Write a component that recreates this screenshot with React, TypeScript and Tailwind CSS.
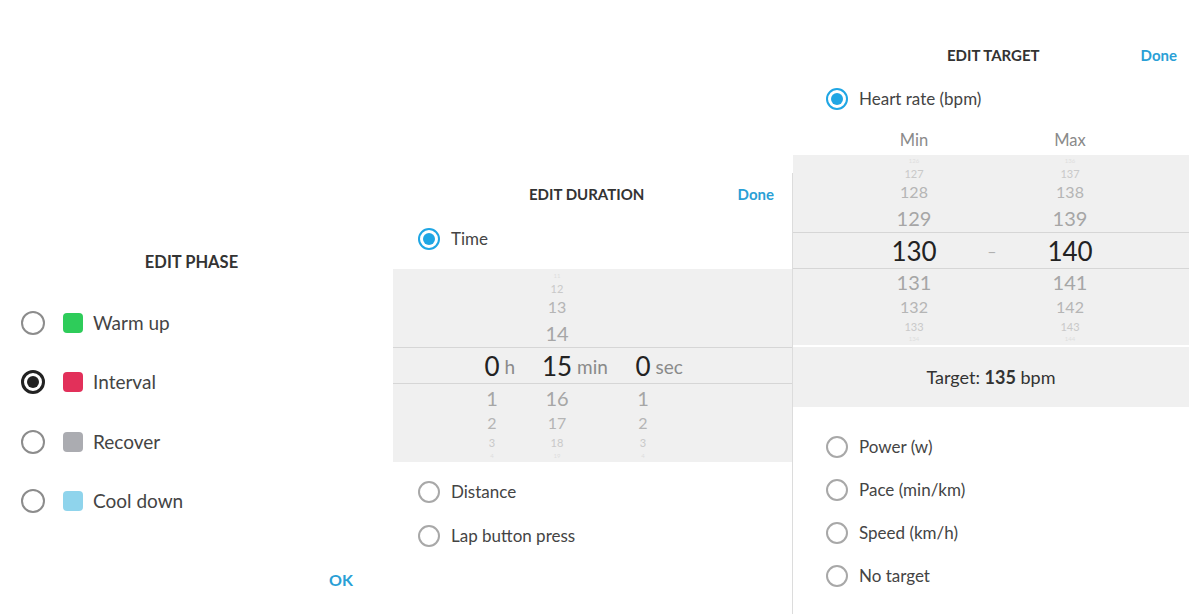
import React from 'react';

type Cell = { v: string; h: string; s: string; c: string };

const TOP_M_H = ['h-[13px]', 'h-[13px]', 'h-[24px]', 'h-[28px]'];
const TOP_R_H = ['h-[12px]', 'h-[13px]', 'h-[24px]', 'h-[28px]'];
const BOT_M_H = ['h-[28px]', 'h-[22px]', 'h-[16px]', 'h-[12px]'];
const BOT_R_H = ['h-[26px]', 'h-[24px]', 'h-[14px]', 'h-[12px]'];
const TOP_S = ['text-[6px]', 'text-[11px]', 'text-[16px]', 'text-[20px]'];
const TOP_C = ['text-[#dedede]', 'text-[#c9c9c9]', 'text-[#b5b5b5]', 'text-[#a6a6a6]'];
const BOT_S = ['text-[20px]', 'text-[16px]', 'text-[11px]', 'text-[6px]'];
const BOT_C = ['text-[#a6a6a6]', 'text-[#b5b5b5]', 'text-[#c9c9c9]', 'text-[#dedede]'];

function build(vals: string[], hs: string[], ss: string[], cs: string[]): Cell[] {
  return vals.map((v, i) => ({ v, h: hs[i], s: ss[i], c: cs[i] }));
}

function WheelCol({ cells, className }: { cells: Cell[]; className: string }) {
  return (
    <div className={`flex flex-col ${className}`}>
      {cells.map((c, i) => (
        <div key={i} className={`${c.h} flex items-center justify-center leading-none ${c.s} ${c.c}`}>
          {c.v}
        </div>
      ))}
    </div>
  );
}

function RadioOff({ big }: { big?: boolean }) {
  return big ? (
    <div className="w-[24px] h-[24px] rounded-full border-2 border-[#8c8c8c] shrink-0" />
  ) : (
    <div className="w-[22px] h-[22px] rounded-full border-2 border-[#a8a8a8] shrink-0" />
  );
}

function RadioBlue() {
  return (
    <div className="w-[22px] h-[22px] rounded-full border-[2.5px] border-[#1fa6e4] flex items-center justify-center shrink-0">
      <div className="w-[12px] h-[12px] rounded-full bg-[#1fa6e4]" />
    </div>
  );
}

function RadioBlack() {
  return (
    <div className="w-[24px] h-[24px] rounded-full border-[3px] border-[#222] flex items-center justify-center shrink-0">
      <div className="w-[12px] h-[12px] rounded-full bg-[#222]" />
    </div>
  );
}

function Selected({ n, unit }: { n: string; unit: string }) {
  return (
    <div className="flex items-baseline justify-center">
      <span className="text-[26px] leading-none text-[#222]">{n}</span>
      <span className="w-0 ml-[5px] mr-[-5px] whitespace-nowrap text-[19px] leading-none text-[#8a8a8a] -translate-y-[2px]">{unit}</span>
    </div>
  );
}

const phases = [
  { label: 'Warm up', color: 'bg-[#2ecc5a]', sel: false },
  { label: 'Interval', color: 'bg-[#e2305a]', sel: true },
  { label: 'Recover', color: 'bg-[#abacb1]', sel: false },
  { label: 'Cool down', color: 'bg-[#8fd4ec]', sel: false },
];

export default function App() {
  return (
    <div className="w-[1189px] h-[614px] bg-white flex overflow-hidden font-['Lato',sans-serif]">
      {/* EDIT PHASE */}
      <div className="w-[393px] shrink-0 flex flex-col pt-[252px]">
        <div className="h-[20px] leading-[20px] text-center pr-[10px] text-[16.5px] font-bold text-[#333]">EDIT PHASE</div>
        <div className="mt-[21px] flex flex-col">
          {phases.map((p) => (
            <div key={p.label} className="h-[59.5px] flex items-center">
              <div className="ml-[21px]">{p.sel ? <RadioBlack /> : <RadioOff big />}</div>
              <div className={`ml-[18px] w-[20px] h-[20px] rounded-[4px] ${p.color}`} />
              <div className="ml-[10px] text-[19px] text-[#444]">{p.label}</div>
            </div>
          ))}
        </div>
        <div className="mt-[39px] h-[20px] leading-[20px] text-right pr-[40px] text-[16px] font-bold text-[#2a9fd6]">OK</div>
      </div>

      {/* EDIT DURATION */}
      <div className="w-[400px] shrink-0 mt-[173px] border-r border-[#dcdcdc] flex flex-col">
        <div className="h-[42px] flex items-center">
          <div className="pl-[136px] text-[15px] font-bold text-[#333]">EDIT DURATION</div>
          <div className="ml-auto pr-[18px] text-[15px] font-bold text-[#2a9fd6]">Done</div>
        </div>
        <div className="h-[48px] flex items-center">
          <div className="ml-[25px]"><RadioBlue /></div>
          <div className="ml-[11px] text-[17px] text-[#444]">Time</div>
        </div>
        <div className="mt-[6px] bg-[#f0f0f0] flex flex-col">
          <div className="h-[78px] flex overflow-hidden">
            <div className="w-[40px] ml-[79px]" />
            <WheelCol className="w-[40px] ml-[25px]" cells={build(['11', '12', '13', '14'], TOP_M_H, TOP_S, TOP_C)} />
            <div className="w-[40px] ml-[46px]" />
          </div>
          <div className="h-[37px] border-y border-[#d6d6d6] flex items-center">
            <div className="w-[40px] ml-[79px]"><Selected n="0" unit="h" /></div>
            <div className="w-[40px] ml-[25px]"><Selected n="15" unit="min" /></div>
            <div className="w-[40px] ml-[46px]"><Selected n="0" unit="sec" /></div>
          </div>
          <div className="h-[78px] flex overflow-hidden">
            <WheelCol className="w-[40px] ml-[79px]" cells={build(['1', '2', '3', '4'], BOT_M_H, BOT_S, BOT_C)} />
            <WheelCol className="w-[40px] ml-[25px]" cells={build(['16', '17', '18', '19'], BOT_M_H, BOT_S, BOT_C)} />
            <WheelCol className="w-[40px] ml-[46px]" cells={build(['1', '2', '3', '4'], BOT_M_H, BOT_S, BOT_C)} />
          </div>
        </div>
        <div className="mt-[8px] flex flex-col">
          {['Distance', 'Lap button press'].map((t) => (
            <div key={t} className="h-[44px] flex items-center">
              <div className="ml-[25px]"><RadioOff /></div>
              <div className="ml-[11px] text-[17px] text-[#444]">{t}</div>
            </div>
          ))}
        </div>
      </div>

      {/* EDIT TARGET */}
      <div className="flex-1 mt-[34px] flex flex-col">
        <div className="h-[42px] flex items-center">
          <div className="pl-[154px] text-[15px] font-bold text-[#333]">EDIT TARGET</div>
          <div className="ml-auto pr-[12px] text-[15px] font-bold text-[#2a9fd6]">Done</div>
        </div>
        <div className="h-[46px] flex items-center">
          <div className="ml-[33px]"><RadioBlue /></div>
          <div className="ml-[11px] text-[17px] text-[#444]">Heart rate (bpm)</div>
        </div>
        <div className="h-[33px] pt-[3px] flex items-center">
          <div className="w-[80px] ml-[81px] text-center text-[16.5px] text-[#8a8a8a]">Min</div>
          <div className="w-[76px]" />
          <div className="w-[80px] text-center text-[16.5px] text-[#8a8a8a]">Max</div>
        </div>
        <div className="bg-[#f0f0f0] flex flex-col">
          <div className="h-[77px] flex overflow-hidden">
            <WheelCol className="w-[80px] ml-[81px]" cells={build(['126', '127', '128', '129'], TOP_R_H, TOP_S, TOP_C)} />
            <div className="w-[76px]" />
            <WheelCol className="w-[80px]" cells={build(['136', '137', '138', '139'], TOP_R_H, TOP_S, TOP_C)} />
          </div>
          <div className="h-[37px] border-y border-[#d6d6d6] flex items-center">
            <div className="w-[80px] ml-[81px] text-center text-[26px] leading-none text-[#222]">130</div>
            <div className="w-[76px] text-center text-[16px] leading-none text-[#b0b0b0]">–</div>
            <div className="w-[80px] text-center text-[26px] leading-none text-[#222]">140</div>
          </div>
          <div className="h-[76px] flex overflow-hidden">
            <WheelCol className="w-[80px] ml-[81px]" cells={build(['131', '132', '133', '134'], BOT_R_H, BOT_S, BOT_C)} />
            <div className="w-[76px]" />
            <WheelCol className="w-[80px]" cells={build(['141', '142', '143', '144'], BOT_R_H, BOT_S, BOT_C)} />
          </div>
        </div>
        <div className="h-[2px] bg-white" />
        <div className="h-[60px] bg-[#f0f0f0] flex items-center justify-center text-[18px] text-[#333]">
          <span>Target:&nbsp;</span>
          <span className="font-bold">135</span>
          <span>&nbsp;bpm</span>
        </div>
        <div className="mt-[18px] flex flex-col">
          {['Power (w)', 'Pace (min/km)', 'Speed (km/h)', 'No target'].map((t) => (
            <div key={t} className="h-[43px] flex items-center">
              <div className="ml-[33px]"><RadioOff /></div>
              <div className="ml-[11px] text-[17px] text-[#444]">{t}</div>
            </div>
          ))}
        </div>
      </div>
    </div>
  );
}
